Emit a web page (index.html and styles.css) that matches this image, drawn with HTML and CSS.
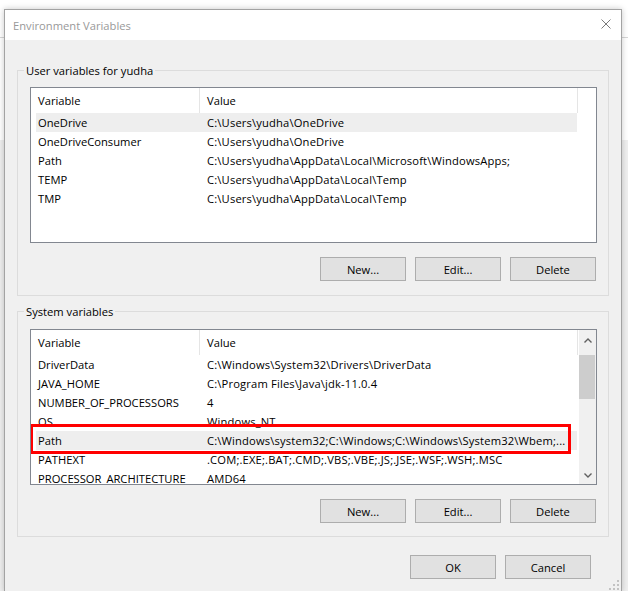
FILE: index.html
```html
<!DOCTYPE html>
<html>
<head>
<meta charset="utf-8">
<title>Environment Variables</title>
<link rel="stylesheet" href="styles.css">
</head>
<body>
<div class="desktop">
  <div class="dialog">
    <div class="titlebar">
      <span class="title">Environment Variables</span>
      <svg class="close" width="10" height="10" viewBox="0 0 10 10"><path d="M0.5 0.5L9.5 9.5M9.5 0.5L0.5 9.5" stroke="#7a7a7a" stroke-width="1" fill="none"/></svg>
    </div>
    <div class="content">
      <fieldset class="group user">
        <legend>User variables for yudha</legend>
        <div class="listview">
          <div class="lv-main">
            <div class="lv-header"><div class="hcol c1">Variable</div><div class="hcol c2">Value</div></div>
            <div class="lv-rows">
              <div class="row sel"><span class="c1">OneDrive</span><span class="c2">C:\Users\yudha\OneDrive</span></div>
              <div class="row"><span class="c1">OneDriveConsumer</span><span class="c2">C:\Users\yudha\OneDrive</span></div>
              <div class="row"><span class="c1">Path</span><span class="c2">C:\Users\yudha\AppData\Local\Microsoft\WindowsApps;</span></div>
              <div class="row"><span class="c1">TEMP</span><span class="c2">C:\Users\yudha\AppData\Local\Temp</span></div>
              <div class="row"><span class="c1">TMP</span><span class="c2">C:\Users\yudha\AppData\Local\Temp</span></div>
            </div>
          </div>
        </div>
        <div class="buttons"><button>New...</button><button>Edit...</button><button>Delete</button></div>
      </fieldset>
      <fieldset class="group sys">
        <legend>System variables</legend>
        <div class="listview">
          <div class="lv-main">
            <div class="lv-header"><div class="hcol c1">Variable</div><div class="hcol c2">Value</div></div>
            <div class="lv-rows">
              <div class="row"><span class="c1">DriverData</span><span class="c2">C:\Windows\System32\Drivers\DriverData</span></div>
              <div class="row"><span class="c1">JAVA_HOME</span><span class="c2">C:\Program Files\Java\jdk-11.0.4</span></div>
              <div class="row"><span class="c1">NUMBER_OF_PROCESSORS</span><span class="c2">4</span></div>
              <div class="row"><span class="c1">OS</span><span class="c2">Windows_NT</span></div>
              <div class="row sel"><span class="c1">Path</span><span class="c2">C:\Windows\system32;C:\Windows;C:\Windows\System32\Wbem;...</span></div>
              <div class="row"><span class="c1">PATHEXT</span><span class="c2">.COM;.EXE;.BAT;.CMD;.VBS;.VBE;.JS;.JSE;.WSF;.WSH;.MSC</span></div>
              <div class="row"><span class="c1">PROCESSOR_ARCHITECTURE</span><span class="c2">AMD64</span></div>
            </div>
          </div>
          <div class="scrollbar">
            <div class="sb-btn up"><svg width="8" height="5" viewBox="0 0 8 5"><path d="M0.5 4.5L4 1L7.5 4.5" stroke="#606060" stroke-width="1.4" fill="none"/></svg></div>
            <div class="sb-track">
              <div class="sb-thumb"></div>
            </div>
            <div class="sb-btn down"><svg width="8" height="5" viewBox="0 0 8 5"><path d="M0.5 0.5L4 4L7.5 0.5" stroke="#606060" stroke-width="1.4" fill="none"/></svg></div>
          </div>
          <div class="mark"></div>
        </div>
        <div class="buttons"><button>New...</button><button>Edit...</button><button>Delete</button></div>
      </fieldset>
      <div class="footer"><button>OK</button><button>Cancel</button></div>
    </div>
    <svg class="grip" width="10" height="10" viewBox="0 0 10 10">
      <rect x="8" y="0" width="2" height="2" fill="#c2c2c2"/>
      <rect x="8" y="4" width="2" height="2" fill="#c2c2c2"/>
      <rect x="4" y="4" width="2" height="2" fill="#c2c2c2"/>
      <rect x="8" y="8" width="2" height="2" fill="#c2c2c2"/>
      <rect x="4" y="8" width="2" height="2" fill="#c2c2c2"/>
      <rect x="0" y="8" width="2" height="2" fill="#c2c2c2"/>
    </svg>
  </div>
</div>
</body>
</html>
```
FILE: styles.css
```css
* { box-sizing: border-box; }
html, body { margin: 0; padding: 0; }
body {
  width: 628px;
  height: 591px;
  overflow: hidden;
  font-family: "Open Sans", "Noto Sans", sans-serif;
  font-size: 11.2px;
  color: #000;
  background: #fff;
}
.desktop {
  height: 591px;
  padding: 9px 0 0 4px;
  background: linear-gradient(to bottom, #fff 0, #fff 37px, #d6d6d6 37px, #d6d6d6 38px, #fff 38px, #fff 140px, #efefef 140px);
}
.dialog {
  position: relative;
  width: 618px;
  height: 583px;
  border: 1px solid #a3a3a3;
  background: #f0f0f0;
  box-shadow: 0 0 6px rgba(0, 0, 0, 0.22);
}
.titlebar {
  height: 30px;
  background: #fff;
  display: flex;
  align-items: center;
  justify-content: space-between;
  padding: 0 10px 0 8px;
}
.title { color: #999; line-height: 15px; }
.close { margin-bottom: 2px; }
.content { padding: 23px 12px 0; }
.group {
  margin: 0;
  min-width: 0;
  border: 1px solid #dcdcdc;
  padding: 9px 11px 14px 12px;
}
.group legend {
  padding: 0 2px;
  margin-left: -6px;
  line-height: 15px;
}
.group.sys {
  margin-top: 8px;
  padding-top: 10px;
  padding-bottom: 13px;
}
.listview {
  position: relative;
  width: 567px;
  height: 156px;
  border: 1px solid #828790;
  background: #fff;
  display: flex;
  overflow: hidden;
}
.lv-main { flex: 1; min-width: 0; overflow: hidden; }
.lv-header { display: flex; height: 25px; }
.hcol {
  display: flex;
  align-items: center;
  padding-left: 7px;
  border-right: 1px solid #e5e5e5;
}
.hcol.c1 { width: 169px; }
.hcol.c2 { width: 378px; }
.lv-rows { margin-left: 5px; width: 541px; }
.row {
  display: flex;
  align-items: center;
  height: 19px;
  white-space: nowrap;
}
.row.sel { background: #eeeeee; }
.row .c1 { width: 163px; padding-left: 2px; flex: none; }
.row .c2 { flex: 1; padding-left: 8px; overflow: hidden; letter-spacing: 0.16px; }
.scrollbar {
  width: 17px;
  flex: none;
  background: #f0f0f0;
  display: flex;
  flex-direction: column;
}
.sb-btn {
  height: 17px;
  display: flex;
  justify-content: center;
  align-items: center;
}
.sb-btn.up { padding-top: 3px; }
.sb-btn svg { display: block; }
.sb-track { flex: 1; padding-top: 8px; }
.sb-thumb { width: 16px; height: 44px; background: #cdcdcd; }
.mark {
  position: absolute;
  left: -1px;
  top: 94px;
  width: 541px;
  height: 30px;
  border: 3px solid #ff0000;
}
.buttons {
  display: flex;
  justify-content: flex-end;
  gap: 9px;
  margin-top: 14px;
  padding-right: 1px;
}
button {
  width: 86px;
  height: 24px;
  padding: 0;
  margin: 0;
  font: inherit;
  color: #000;
  background: #e1e1e1;
  border: 1px solid #adadad;
  border-radius: 0;
}
.footer {
  display: flex;
  justify-content: flex-end;
  gap: 9px;
  margin-top: 18px;
  padding-right: 18px;
}
.grip {
  position: absolute;
  right: 2px;
  bottom: 1px;
}
```
